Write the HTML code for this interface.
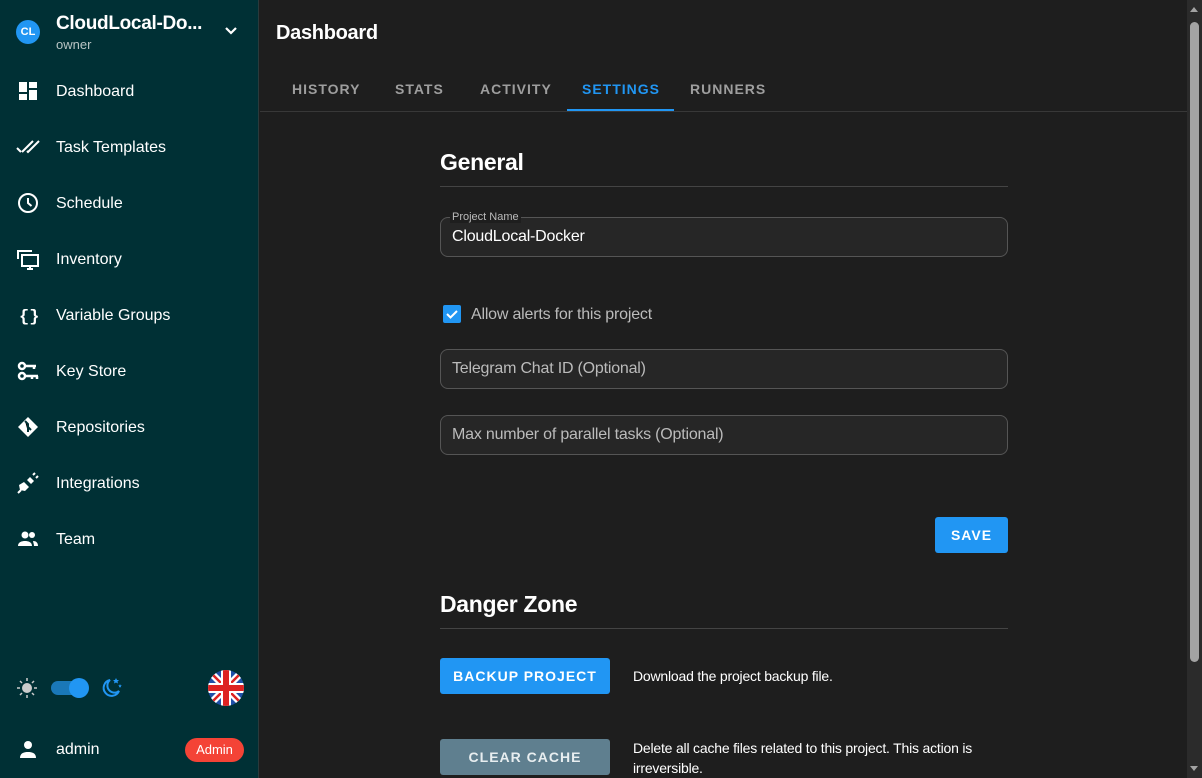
<!DOCTYPE html>
<html><head><meta charset="utf-8"><style>
*{box-sizing:border-box;margin:0;padding:0}
body{width:1202px;height:778px;overflow:hidden;background:#1e1e1e;font-family:"Liberation Sans",Roboto,sans-serif;color:#fff;position:relative}
.side{position:absolute;left:0;top:0;width:259px;height:778px;background:#003035;border-right:1px solid #2a3a3c}
.av{position:absolute;left:16px;top:20px;width:24px;height:24px;border-radius:50%;background:#2196f3;font-size:11px;font-weight:bold;text-align:center;line-height:24px}
.pn{position:absolute;left:56px;top:13px;font-size:19px;font-weight:bold;letter-spacing:-0.3px}
.ow{position:absolute;left:56px;top:37px;font-size:13px;color:#b8c4c4}
.item{position:absolute;left:0;width:259px;height:56px;font-size:16px}
.item span{position:absolute;left:56px;top:20px}
.item svg{position:absolute;left:16px;top:16px}
.main{position:absolute;left:260px;top:0;right:15px;height:778px}
h1{position:absolute;left:16px;top:22px;font-size:20px;font-weight:bold;letter-spacing:-0.3px}
.tabs{position:absolute;left:0;top:64px;right:0;height:48px;border-bottom:1px solid #383838}
.tab{position:absolute;top:17px;font-size:14px;font-weight:bold;letter-spacing:1px;color:#9e9e9e}
.hd{position:absolute;left:180px;width:568px;font-size:23px;font-weight:bold;border-bottom:1px solid #444;padding-bottom:10px;letter-spacing:-0.3px}
.fld{position:absolute;left:180px;width:568px;height:40px;border:1px solid #555;border-radius:8px;background:#262626;font-size:16px;color:#bbb;padding:10px 11px;letter-spacing:-0.2px}
.btn{position:absolute;background:#2196f3;color:#fff;font-size:14px;font-weight:bold;letter-spacing:1px;text-align:center;border-radius:3px}
.sb{position:absolute;right:0;top:0;width:15px;height:778px;background:#2b2b2b}
</style></head><body>
<div class="side">
<div class="av">CL</div><div class="pn">CloudLocal-Do...</div><div class="ow">owner</div>
<svg style="position:absolute;left:224px;top:26px" width="14" height="10" viewBox="0 0 14 10"><path d="M2 2l5 5 5-5" stroke="#fff" stroke-width="2.2" fill="none"/></svg>
<div class="item" style="top:63px"><svg width="24" height="24" viewBox="0 0 24 24"><path fill="#fff" d="M3 13h8V3H3zm0 8h8v-6H3zm10 0h8V11h-8zm0-18v6h8V3z"/></svg><span>Dashboard</span></div>
<div class="item" style="top:119px"><svg width="24" height="24" viewBox="0 0 24 24"><path fill="none" stroke="#fff" stroke-width="2" d="M1 13l4 4M6 17l11-11M11 16l1 1 11-11"/></svg><span>Task Templates</span></div>
<div class="item" style="top:175px"><svg width="24" height="24" viewBox="0 0 24 24"><circle cx="12" cy="12" r="9" fill="none" stroke="#fff" stroke-width="2"/><path d="M12 7v5l3.5 3" stroke="#fff" stroke-width="2" fill="none"/></svg><span>Schedule</span></div>
<div class="item" style="top:231px"><svg width="24" height="24" viewBox="0 0 24 24"><path fill="none" stroke="#fff" stroke-width="2" d="M2 12V4h14M6 8h16v11H6zM11 22h6M14 19v3"/></svg><span>Inventory</span></div>
<div class="item" style="top:287px"><svg width="24" height="24" viewBox="0 0 24 24"><text x="3" y="18" fill="#fff" font-size="17" font-weight="bold" font-family="Liberation Mono">{}</text></svg><span>Variable Groups</span></div>
<div class="item" style="top:343px"><svg width="24" height="24" viewBox="0 0 24 24"><circle cx="6" cy="7" r="3" fill="none" stroke="#fff" stroke-width="2.5"/><circle cx="6" cy="17" r="3" fill="none" stroke="#fff" stroke-width="2.5"/><path d="M9 7h11M9 17h13M18 7v3M16 17v3M21 17v3" stroke="#fff" stroke-width="2.5"/></svg><span>Key Store</span></div>
<div class="item" style="top:399px"><svg width="24" height="24" viewBox="0 0 24 24"><path fill="#fff" d="M12 2l10 10-10 10L2 12z"/><path d="M9 6l3 3v8M12 12l3 3" stroke="#003035" stroke-width="2"/></svg><span>Repositories</span></div>
<div class="item" style="top:455px"><svg width="24" height="24" viewBox="0 0 24 24"><path fill="#fff" d="M8 11l5 5-4 4-5-1-1-5zM14 6l4 4-3 3-4-4z"/><path d="M2 22l3-3M17 4l2-2M20 7l2-2" stroke="#fff" stroke-width="2"/></svg><span>Integrations</span></div>
<div class="item" style="top:511px"><svg width="24" height="24" viewBox="0 0 24 24"><circle cx="9" cy="8" r="3.5" fill="#fff"/><circle cx="16" cy="8" r="3" fill="#fff"/><path fill="#fff" d="M2 19c0-4 4-5 7-5s7 1 7 5zM17 14c3 0 5 1.5 5 5h-4c0-2-1-4-1-5z"/></svg><span>Team</span></div>
<svg style="position:absolute;left:16px;top:677px" width="22" height="22" viewBox="0 0 22 22"><circle cx="11" cy="11" r="5" fill="#ccc"/><path d="M11 1v3M11 18v3M1 11h3M18 11h3M4 4l2 2M16 16l2 2M4 18l2-2M16 6l2-2" stroke="#ccc" stroke-width="1.5"/></svg>
<div style="position:absolute;left:51px;top:681px;width:34px;height:14px;border-radius:7px;background:#1a78b8"></div>
<div style="position:absolute;left:69px;top:678px;width:20px;height:20px;border-radius:50%;background:#2196f3"></div>
<svg style="position:absolute;left:101px;top:676px" width="22" height="22" viewBox="0 0 22 22"><path d="M9 4a8 8 0 1 0 9 11A7 7 0 0 1 9 4z" fill="none" stroke="#2196f3" stroke-width="2"/><path d="M15 2l1 2 2 0-1.5 1.5.5 2-2-1-2 1 .5-2L12 4h2zM19 8l.5 1.2 1.3.3-1 .8.3 1.3-1.1-.7-1.1.7.3-1.3-1-.8 1.3-.3z" fill="#2196f3"/></svg>
<svg style="position:absolute;left:208px;top:670px" width="36" height="36" viewBox="0 0 36 36"><clipPath id="c"><circle cx="18" cy="18" r="18"/></clipPath><g clip-path="url(#c)"><rect width="36" height="36" fill="#1f4fa8"/><path d="M0 0L36 36M36 0L0 36" stroke="#fff" stroke-width="7"/><path d="M0 0L36 36M36 0L0 36" stroke="#d22" stroke-width="2.5"/><path d="M18 0v36M0 18h36" stroke="#fff" stroke-width="10"/><path d="M18 0v36M0 18h36" stroke="#d22" stroke-width="6"/></g></svg>
<svg style="position:absolute;left:18px;top:739px" width="20" height="20" viewBox="0 0 20 20"><circle cx="10" cy="6" r="4" fill="#fff"/><path d="M2 19c0-5 4-6 8-6s8 1 8 6z" fill="#fff"/></svg>
<div style="position:absolute;left:56px;top:741px;font-size:16px">admin</div>
<div style="position:absolute;left:185px;top:738px;width:59px;height:24px;border-radius:12px;background:#f44336;font-size:13px;text-align:center;line-height:24px">Admin</div>
</div>
<div class="main">
<h1>Dashboard</h1>
<div class="tabs">
<div class="tab" style="left:32px">HISTORY</div>
<div class="tab" style="left:135px">STATS</div>
<div class="tab" style="left:220px">ACTIVITY</div>
<div class="tab" style="left:322px;color:#2196f3">SETTINGS</div>
<div class="tab" style="left:430px">RUNNERS</div>
<div style="position:absolute;left:307px;top:45px;width:107px;height:2px;background:#2196f3"></div>
</div>
<div class="hd" style="top:149px">General</div>
<div class="fld" style="top:217px;color:#fff;padding-top:10px">CloudLocal-Docker</div>
<div style="position:absolute;left:190px;top:211px;font-size:11px;color:#bbb;background:#1e1e1e;padding:0 2px">Project Name</div>
<div style="position:absolute;left:183px;top:305px;width:18px;height:18px;border-radius:2px;background:#2196f3"><svg width="18" height="18" viewBox="0 0 18 18"><path d="M4 9l3.5 3.5L14 6" stroke="#fff" stroke-width="2" fill="none"/></svg></div>
<div style="position:absolute;left:211px;top:306px;font-size:16px;color:#bbb;letter-spacing:-0.2px">Allow alerts for this project</div>
<div class="fld" style="top:349px">Telegram Chat ID (Optional)</div>
<div class="fld" style="top:415px">Max number of parallel tasks (Optional)</div>
<div class="btn" style="left:675px;top:517px;width:73px;height:36px;line-height:36px">SAVE</div>
<div class="hd" style="top:591px">Danger Zone</div>
<div class="btn" style="left:180px;top:658px;width:170px;height:36px;line-height:36px">BACKUP PROJECT</div>
<div style="position:absolute;left:373px;top:668px;font-size:14px;letter-spacing:-0.2px">Download the project backup file.</div>
<div class="btn" style="left:180px;top:739px;width:170px;height:36px;line-height:36px;background:#5f7f8f;color:#e8eef0">CLEAR CACHE</div>
<div style="position:absolute;left:373px;top:738px;font-size:14px;line-height:20px;width:380px;letter-spacing:-0.2px">Delete all cache files related to this project. This action is irreversible.</div>
</div>
<div class="sb"><div style="position:absolute;left:3px;top:22px;width:9px;height:640px;border-radius:5px;background:#a3a3a3"></div>
<div style="position:absolute;left:3px;top:7px;border:4.5px solid transparent;border-bottom:5px solid #a3a3a3;border-top:0"></div>
<div style="position:absolute;left:3px;top:766px;border:4.5px solid transparent;border-top:5px solid #a3a3a3;border-bottom:0"></div></div>
</body></html>
